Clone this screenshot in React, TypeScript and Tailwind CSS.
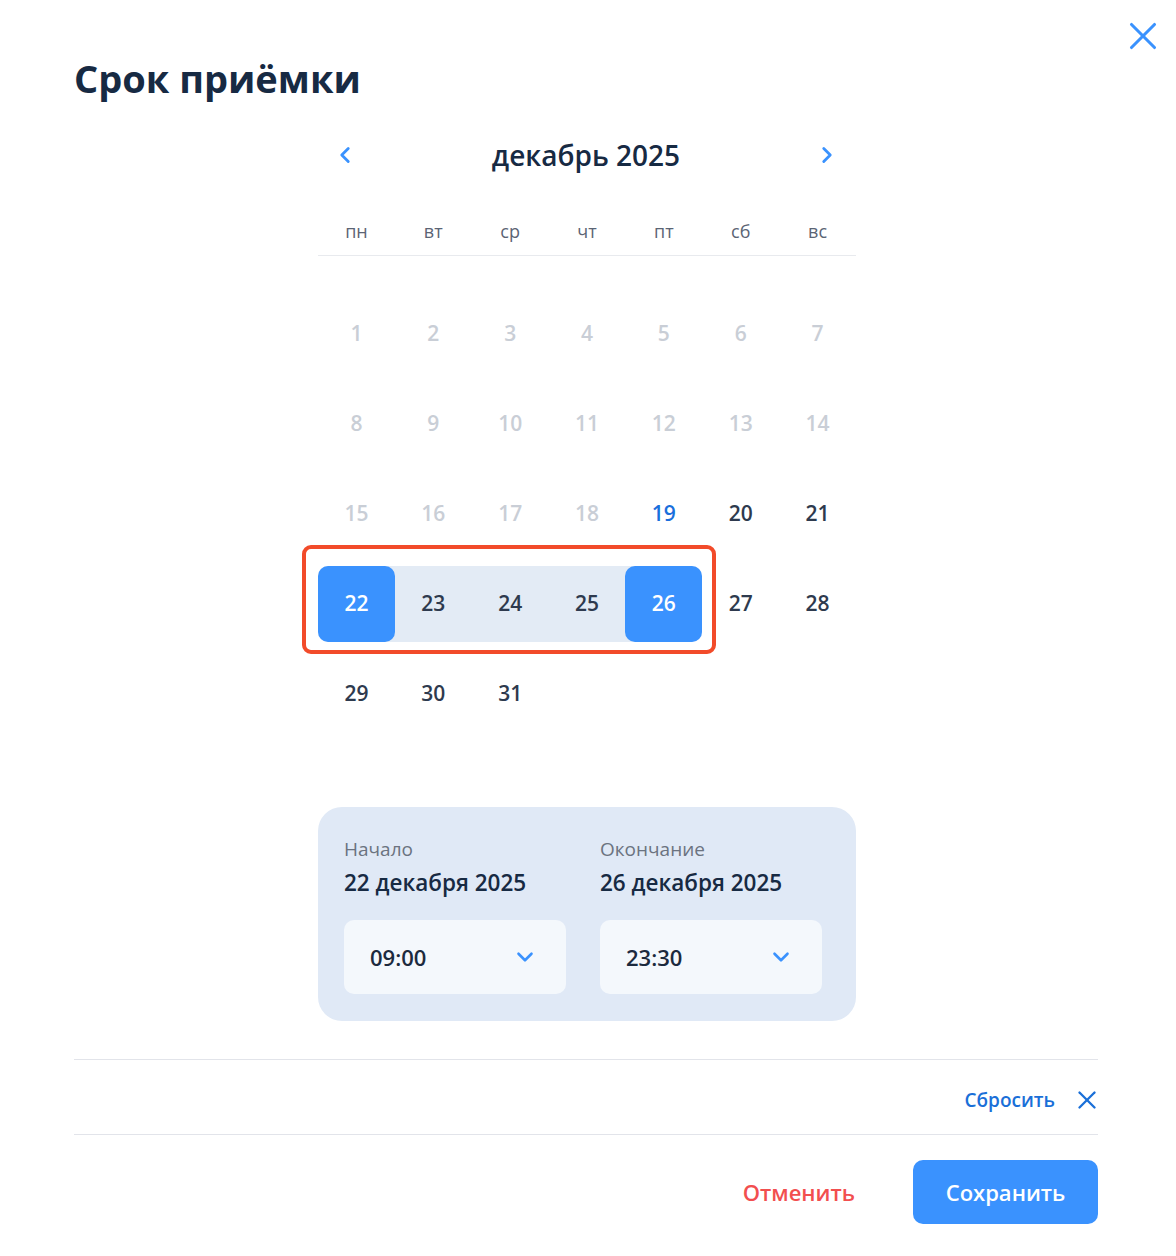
import { ChevronDown, ChevronLeft, ChevronRight, X } from "lucide-react"

const weekdays = ["пн", "вт", "ср", "чт", "пт", "сб", "вс"]

type Day = { n: number; kind: "past" | "today" | "normal" | "start" | "end" | "mid" }

function buildDays(): Day[] {
  const days: Day[] = []
  for (let n = 1; n <= 31; n++) {
    let kind: Day["kind"] = "normal"
    if (n < 19) kind = "past"
    else if (n === 19) kind = "today"
    else if (n === 22) kind = "start"
    else if (n === 26) kind = "end"
    else if (n > 22 && n < 26) kind = "mid"
    days.push({ n, kind })
  }
  return days
}

function DayCell({ day }: { day: Day }) {
  if (day.kind === "start" || day.kind === "end") {
    return (
      <div className={day.kind === "start" ? "h-[76px] bg-[#e3ebf5] rounded-l-[10px]" : "h-[76px] bg-[#e3ebf5] rounded-r-[10px]"}>
        <div className="h-full w-full rounded-[10px] bg-[#3a92fe] flex items-center justify-center text-[21px] font-semibold text-white">
          {day.n}
        </div>
      </div>
    )
  }
  if (day.kind === "mid") {
    return (
      <div className="h-[76px] bg-[#e3ebf5] flex items-center justify-center text-[21px] font-semibold text-[#2e3a4e]">
        {day.n}
      </div>
    )
  }
  const color =
    day.kind === "past" ? "text-[#c9ced6]" : day.kind === "today" ? "text-[#1a6fdc]" : "text-[#2e3a4e]"
  return (
    <div className={`h-[76px] flex items-center justify-center text-[21px] font-semibold ${color}`}>{day.n}</div>
  )
}

function TimeSelect({ value }: { value: string }) {
  return (
    <div className="h-[74px] rounded-[10px] bg-[#f4f8fc] flex items-center justify-between pl-[26px] pr-[28px]">
      <span className="text-[22px] font-semibold text-[#1c2a3e]">{value}</span>
      <ChevronDown size={26} strokeWidth={2.4} className="text-[#3a92fe]" />
    </div>
  )
}

export default function App() {
  const days = buildDays()
  const rows: Day[][] = []
  for (let i = 0; i < days.length; i += 7) rows.push(days.slice(i, i + 7))

  return (
    <div
      className="relative min-h-screen w-[1176px] h-[1256px] bg-white text-[#172a43]"
      style={{ fontFamily: '"Open Sans", "Noto Sans", sans-serif' }}
    >
      <button className="absolute right-[10px] top-[13px] text-[#3a92fe]">
        <X size={46} strokeWidth={1.6} />
      </button>

      <div className="pl-[74px] pr-[78px] pt-[50px]">
        <h1 className="text-[38px] font-bold leading-[56px] text-[#172a43]">Срок приёмки</h1>

        <div className="ml-[244px] mt-[24px] w-[538px]">
          <div className="flex items-center justify-between h-[50px] pl-[14px] pr-[16px]">
            <ChevronLeft size={26} strokeWidth={2.6} className="text-[#3a92fe]" />
            <span className="text-[28px] font-semibold text-[#172a43]">декабрь 2025</span>
            <ChevronRight size={26} strokeWidth={2.6} className="text-[#3a92fe]" />
          </div>

          <div className="mt-[39px] grid grid-cols-7 border-b border-[#e8eaee] pb-[12px]">
            {weekdays.map((w) => (
              <div key={w} className="text-center text-[18px] text-[#5b6474] leading-[24px]">
                {w}
              </div>
            ))}
          </div>

          <div className="mt-[40px] flex flex-col gap-[14px]">
            {rows.map((row, ri) => (
              <div key={ri} className="relative grid grid-cols-7">
                {row.map((d) => (
                  <DayCell key={d.n} day={d} />
                ))}
                {ri === 3 && (
                  <div className="pointer-events-none absolute left-[-16px] top-[-21px] w-[414px] h-[109px] rounded-[9px] border-[4px] border-[#f24b2a]" />
                )}
              </div>
            ))}
          </div>

          <div className="mt-[75px] rounded-[24px] bg-[#e0e9f6] pt-[29px] pb-[27px] pl-[26px] pr-[34px] grid grid-cols-2 gap-x-[34px]">
            <div>
              <div className="text-[19px] text-[#6b7380] leading-[26px]">Начало</div>
              <div className="mt-[6px] text-[22.5px] font-semibold leading-[30px] text-[#172a43]">22 декабря 2025</div>
              <div className="mt-[22px]">
                <TimeSelect value="09:00" />
              </div>
            </div>
            <div>
              <div className="text-[19px] text-[#6b7380] leading-[26px]">Окончание</div>
              <div className="mt-[6px] text-[22.5px] font-semibold leading-[30px] text-[#172a43]">26 декабря 2025</div>
              <div className="mt-[22px]">
                <TimeSelect value="23:30" />
              </div>
            </div>
          </div>
        </div>
      </div>

      <div className="ml-[74px] mr-[78px] mt-[38px] border-t border-[#e2e4ea]">
        <div className="flex items-center justify-end h-[74px] pt-[6px] mr-[-4px] gap-[17px]">
          <span className="text-[19px] font-semibold text-[#1a6fd8]">Сбросить</span>
          <X size={30} strokeWidth={1.9} className="text-[#1a6fd8]" />
        </div>
        <div className="border-t border-[#e2e4ea] flex items-center justify-end pt-[25px] gap-[58px]">
          <button className="text-[22px] font-semibold text-[#f24f4f]">Отменить</button>
          <button className="h-[64px] w-[185px] rounded-[10px] bg-[#3a92fe] text-[22px] font-semibold text-white">
            Сохранить
          </button>
        </div>
      </div>
    </div>
  )
}
